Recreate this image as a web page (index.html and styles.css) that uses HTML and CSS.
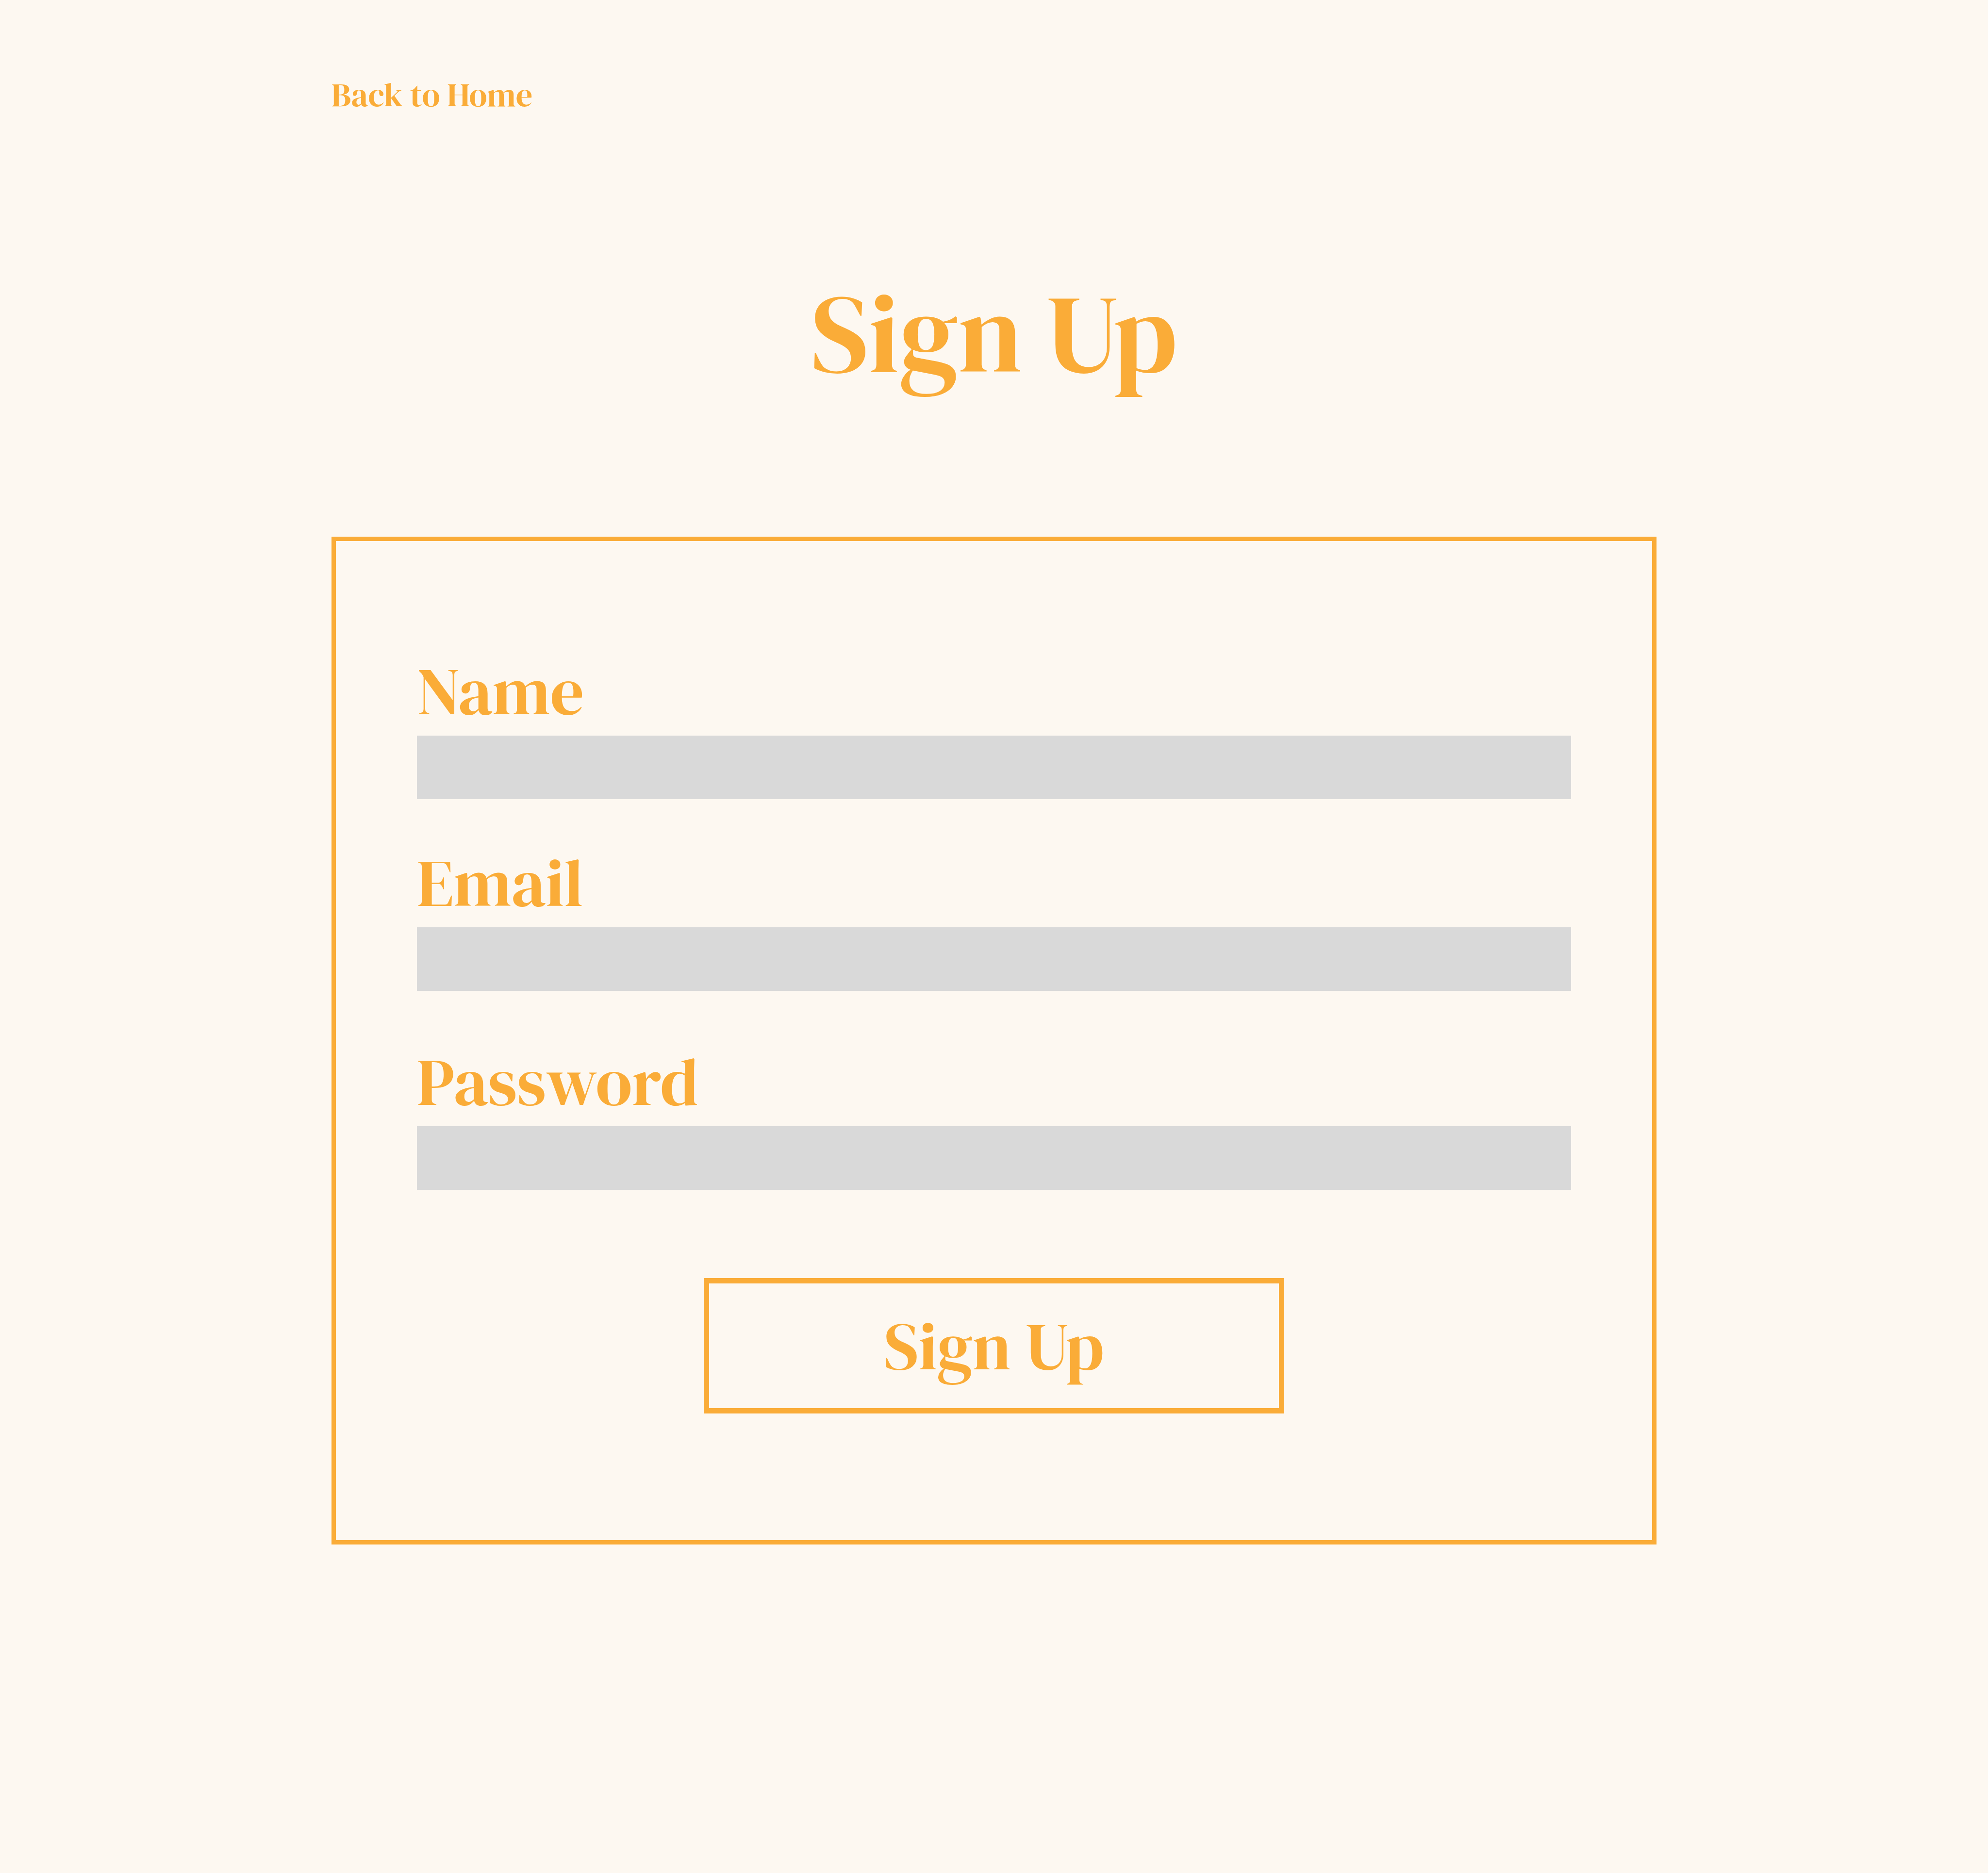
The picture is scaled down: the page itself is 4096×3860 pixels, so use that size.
FILE: index.html
```html
<!DOCTYPE html>
<html lang="en">
<head>
<meta charset="utf-8">
<meta name="viewport" content="width=device-width, initial-scale=1">
<title>Sign Up</title>
<link rel="stylesheet" href="styles.css">
</head>
<body>
<div class="page">
  <nav class="nav"><a class="back-link" href="#">Back to Home</a></nav>
  <main class="main">
    <h1 class="title">Sign Up</h1>
    <form class="card">
      <div class="field">
        <label class="label" for="name">Name</label>
        <input class="input" id="name" name="name" type="text">
      </div>
      <div class="field">
        <label class="label" for="email">Email</label>
        <input class="input" id="email" name="email" type="email">
      </div>
      <div class="field field-password">
        <label class="label" for="password">Password</label>
        <input class="input" id="password" name="password" type="password">
      </div>
      <button class="submit" type="submit">Sign Up</button>
    </form>
  </main>
</div>
</body>
</html>
```
FILE: styles.css
```css
:root {
  --accent: #faac38;
  --background: #fdf8f1;
  --field: #d9d9d9;
}

* {
  box-sizing: border-box;
}

body {
  margin: 0;
  background: var(--background);
  color: var(--accent);
  font-family: "DM Serif Display", "Liberation Serif", serif;
  font-weight: 400;
}

.page {
  display: grid;
  grid-template-columns: 1fr 4fr 1fr;
  min-height: 100vh;
  align-content: start;
  padding: 156px 0;
}

.nav,
.main {
  grid-column: 2;
}

.nav {
  display: flex;
}

.back-link {
  color: inherit;
  font-size: 68px;
  line-height: 80px;
  text-decoration: none;
}

.title {
  margin: 330px 0 300px;
  font-size: 228px;
  font-weight: 400;
  line-height: 240px;
  text-align: center;
}

.card {
  display: flex;
  flex-direction: column;
  padding: 229px 167px 261px;
  border: 9px solid var(--accent);
}

.field {
  display: flex;
  flex-direction: column;
  gap: 12px;
  margin-bottom: 92px;
}

.field-password {
  margin-top: 15px;
  margin-bottom: 182px;
}

.label {
  font-size: 137px;
  line-height: 160px;
}

.input {
  width: 100%;
  height: 131px;
  padding: 0 32px;
  border: 0;
  border-radius: 0;
  background: var(--field);
  color: #333;
  font: inherit;
  font-size: 68px;
}

.submit {
  align-self: center;
  width: calc(50% + 6px);
  min-width: min-content;
  padding: 49px 0 48px;
  border: 11px solid var(--accent);
  border-radius: 0;
  background: transparent;
  color: inherit;
  font: inherit;
  font-size: 137px;
  line-height: 160px;
  cursor: pointer;
}
```
